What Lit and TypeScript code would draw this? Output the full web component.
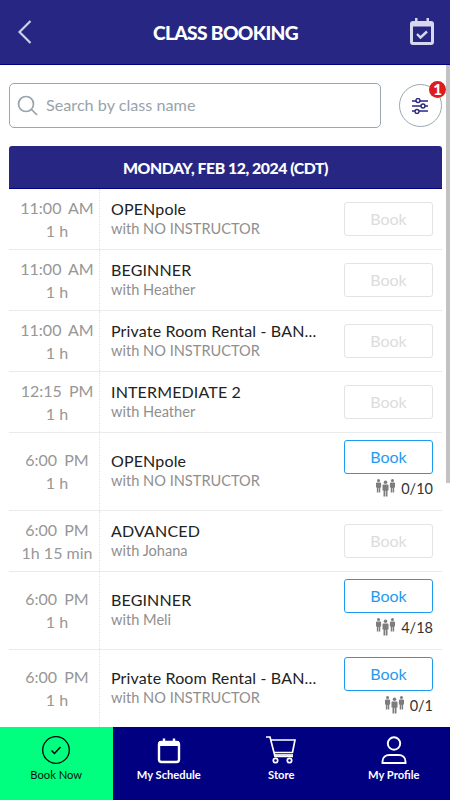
import { LitElement, html, css, svg } from "lit";
import { customElement } from "lit/decorators.js";

interface Row { time: string; ap: string; dur: string; name: string; who: string; cap?: string }
const rental = "Private Room Rental - BAN...";
const rows: Row[] = [
  { time: "11:00", ap: "AM", dur: "1 h", name: "OPENpole", who: "with NO INSTRUCTOR" },
  { time: "11:00", ap: "AM", dur: "1 h", name: "BEGINNER", who: "with Heather" },
  { time: "11:00", ap: "AM", dur: "1 h", name: rental, who: "with NO INSTRUCTOR" },
  { time: "12:15", ap: "PM", dur: "1 h", name: "INTERMEDIATE 2", who: "with Heather" },
  { time: "6:00", ap: "PM", dur: "1 h", name: "OPENpole", who: "with NO INSTRUCTOR", cap: "0/10" },
  { time: "6:00", ap: "PM", dur: "1h 15 min", name: "ADVANCED", who: "with Johana" },
  { time: "6:00", ap: "PM", dur: "1 h", name: "BEGINNER", who: "with Meli", cap: "4/18" },
  { time: "6:00", ap: "PM", dur: "1 h", name: rental, who: "with NO INSTRUCTOR", cap: "0/1" },
];

const person = (x: number, y: number, s: number) => svg`<g transform="translate(${x} ${y}) scale(${s})"><circle cx="3" cy="1.8" r="1.8"/><path d="M1 4h4c.6 0 1 .4 1 1v5H5v6H3.300v-5.500h-.6V16H1v-6H0V5c0-.6.4-1 1-1z"/></g>`;

@customElement("app-root")
export class AppRoot extends LitElement {
  static styles = css`
    :host { display: flex; flex-direction: column; height: 100vh; width: 100%; overflow: hidden; position: relative; background: #fff; font-family: "Lato", "Noto Sans", sans-serif; }
    .header { flex: none; height: 64px; border-bottom: 1px solid #000080; background: #272783; display: flex; align-items: center; padding: 0 16px 0 18px; color: #fff; }
    .header h1 { flex: 1; margin: 0; padding-left: 9px; text-align: center; font-size: 19.200px; font-weight: 900; letter-spacing: -0.65px; }
    .back { width: 14px; height: 26px; flex: none; }
    .cal { width: 24px; height: 27px; flex: none; margin-top: -1px; }
    .main { flex: 1; min-height: 0; overflow: hidden; padding: 18px 8px 0 9px; }
    .tools { display: flex; align-items: center; justify-content: space-between; height: 45px; margin-bottom: 18px; }
    .search { width: 372px; height: 45px; box-sizing: border-box; border: 1px solid #9aa7b0; border-radius: 5px; display: flex; align-items: center; gap: 8px; padding: 0 0 3px 7px; color: #98a3ab; font-size: 16.200px; }
    .search svg { width: 21px; height: 21px; margin-top: 3px; }
    .filter { width: 43px; height: 43px; box-sizing: border-box; border: 1px solid #9aa7b0; border-radius: 50%; position: relative; display: flex; align-items: center; justify-content: flex-start; padding-left: 11px; }
    .filter svg { width: 18px; height: 16px; }
    .badge { position: absolute; top: -4px; right: -5px; width: 17px; height: 17px; border-radius: 50%; background: #e01b1b; color: #fff; font-size: 15px; font-weight: 900; line-height: 17px; text-align: center; }
    .date { height: 43px; background: #272783; border-bottom: 1px solid #000080; box-sizing: border-box; border-radius: 3px 3px 0 0; color: #fff; display: flex; align-items: center; justify-content: center; font-size: 15.800px; font-weight: 900; letter-spacing: -0.45px; }
    .row { display: flex; border-bottom: 1px solid #e8ecee; }
    .when { width: 91px; box-sizing: border-box; padding-left: 6px; flex: none; border-right: 1px dotted #dfe3e6; color: #979797; font-size: 16px; display: flex; flex-direction: column; align-items: center; justify-content: center; gap: 5px; line-height: 18px; white-space: nowrap; }
    .when .t { word-spacing: 3px; }
    .info { flex: 1; min-width: 0; padding: 0 0 1px 11px; display: flex; flex-direction: column; justify-content: center; gap: 1px; }
    .name { font-size: 16px; letter-spacing: 0.15px; line-height: 20px; color: #222; white-space: nowrap; margin-top: -1px; }
    .who { font-size: 14.600px; line-height: 18px; color: #8f8f8f; }
    .act { flex: none; width: 89px; margin-right: 9px; display: flex; flex-direction: column; align-items: stretch; justify-content: center; }
    .act.has-cap { justify-content: flex-start; padding-top: 7px; }
    .btn { height: 34px; box-sizing: border-box; border-radius: 3px; border: 1px solid #e3e3e3; color: #dcdcdc; font-size: 16px; display: flex; align-items: center; justify-content: center; padding-bottom: 2px; }
    .btn.on { border-color: #1e9bf0; color: #1e9bf0; }
    .cap { display: flex; justify-content: flex-end; align-items: center; gap: 6px; font-size: 14.500px; color: #333; margin-top: 5px; height: 18px; }
    .cap svg { width: 19px; height: 18px; fill: #7d7d7d; }
    .nav { flex: none; height: 73px; display: grid; grid-template-columns: repeat(4, 1fr); background: #000080; color: #fff; }
    .tab { display: flex; flex-direction: column; align-items: center; padding-top: 8px; box-sizing: border-box; font-size: 11.200px; font-weight: 700; }
    .tab svg { width: 30px; height: 30px; margin-bottom: 3px; fill: none; stroke: currentColor; }
    .tab.active { background: #00ff7f; color: #06140c; font-weight: 400; }
    .tab.active svg { stroke: #000; }
    .thumb { position: absolute; right: 0; top: 65px; width: 4px; height: 418px; background: #c2c2c2; }
  `;

  private renderRow(r: Row) {
    const h = r.cap ? 77 : 60;
    return html`<div class="row" style="height:${h}px">
      <div class="when"><span class="t">${r.time} ${r.ap}</span><span>${r.dur}</span></div>
      <div class="info"><span class="name">${r.name}</span><span class="who">${r.who}</span></div>
      <div class="act ${r.cap ? "has-cap" : ""}">
        <div class="btn ${r.cap ? "on" : ""}">Book</div>
        ${r.cap ? html`<div class="cap"><svg viewBox="0 0 19 18">${person(0, 0, 0.85)}${person(13.900, 0, 0.85)}${person(6.500, 1.500, 1)}</svg><span>${r.cap}</span></div>` : ""}
      </div>
    </div>`;
  }

  render() {
    return html`
      <div class="header">
        <svg class="back" viewBox="0 0 14 26" fill="none" stroke="#cfd0e8" stroke-width="2.200"><path d="M12.500 2 1.500 13l11 11"/></svg>
        <h1>CLASS BOOKING</h1>
        <svg class="cal" viewBox="0 0 24 27"><path fill="#d8d8ec" d="M5 0h2.500v3h9V0H19v3h2a3 3 0 0 1 3 3v18a3 3 0 0 1-3 3H3a3 3 0 0 1-3-3V6a3 3 0 0 1 3-3h2z"/><rect x="3" y="8.500" width="18" height="15.500" fill="#272783"/><path fill="none" stroke="#d8d8ec" stroke-width="2.400" d="m7 16 3.500 3.500 6.500-6"/></svg>
      </div>
      <div class="main">
        <div class="tools">
          <div class="search">
            <svg viewBox="0 0 21 21" fill="none" stroke="#98a3ab" stroke-width="1.700"><circle cx="9" cy="9" r="7.500"/><path d="m14.500 14.500 5.500 5.500"/></svg>
            <span>Search by class name</span>
          </div>
          <div class="filter">
            <svg viewBox="0 0 18 16" fill="none" stroke="#272783" stroke-width="1.400"><path d="M1 3h16M1 8h16M1 13h16"/><g fill="#fff"><circle cx="7" cy="2.500" r="2"/><circle cx="12" cy="8" r="2"/><circle cx="6" cy="13.500" r="2"/></g></svg>
            <span class="badge">1</span>
          </div>
        </div>
        <div class="date">MONDAY, FEB 12, 2024 (CDT)</div>
        ${rows.map((r) => this.renderRow(r))}
      </div>
      <div class="nav">
        <div class="tab active">
          <svg viewBox="0 0 30 30" stroke-width="1.300"><circle cx="15" cy="15" r="13.300"/><path stroke-width="1.500" d="m10.500 15.500 3 3 6-6.500"/></svg>
          <span>Book Now</span>
        </div>
        <div class="tab">
          <svg viewBox="0 0 30 30" stroke-width="2.400"><rect x="5" y="7" width="20" height="20" rx="2.500"/><path stroke-width="5" d="M5 8.500h20"/><path d="M10 3.500v4M20 3.500v4"/></svg>
          <span>My Schedule</span>
        </div>
        <div class="tab">
          <svg viewBox="0 0 30 30" stroke-width="1.700"><path d="M0 2h4l5 19.500h18M5 5h24l-2.500 12.500H8"/><path d="M8 20h19"/><circle cx="9.500" cy="25.500" r="2.200"/><circle cx="23.500" cy="25.500" r="2.200"/></svg>
          <span>Store</span>
        </div>
        <div class="tab">
          <svg viewBox="0 0 30 30" stroke-width="1.900"><circle cx="15" cy="8.500" r="6.200"/><path d="M3.500 28v-1.500c0-4 3-6.500 7-6.500h9c4 0 7 2.500 7 6.500V28z"/></svg>
          <span>My Profile</span>
        </div>
      </div>
      <div class="thumb"></div>
    `;
  }
}
